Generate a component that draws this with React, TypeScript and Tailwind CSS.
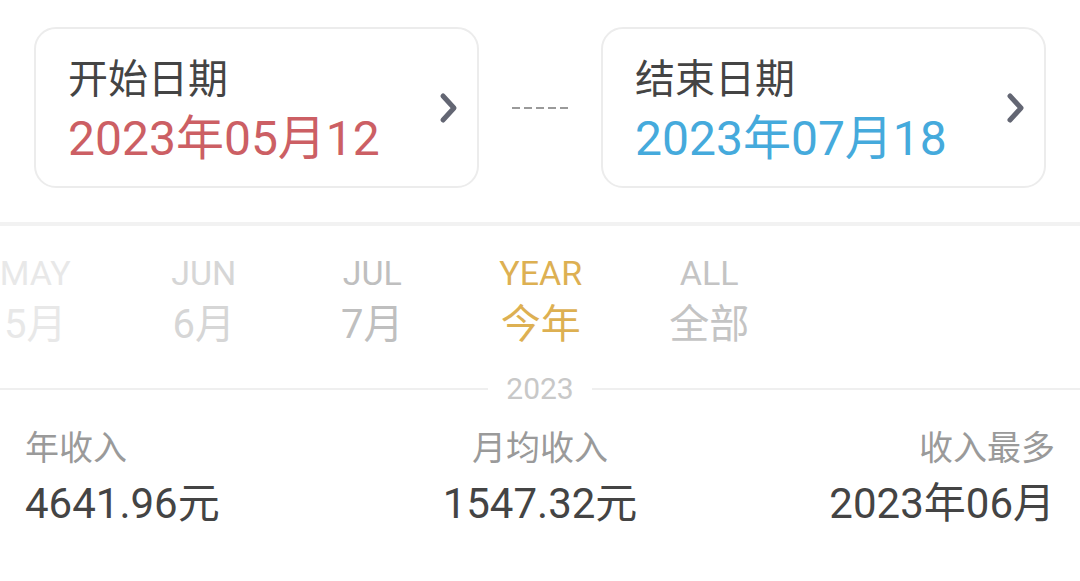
const FONT = 'font-[Roboto,"Noto_Sans_CJK_SC",sans-serif]'

interface DateCardProps {
  title: string
  date: string
  color: string
}

function DateCard({ title, date, color }: DateCardProps) {
  return (
    <div className="flex h-[161px] w-[445px] items-center rounded-[22px] border-2 border-[#ececec] bg-white pl-[32px] pr-[17px]">
      <div className="flex flex-1 flex-col pt-[7px]">
        <span className="text-[40px] leading-[48px] text-[#444444]">{title}</span>
        <span className={`mt-[7px] text-[48px] leading-[56px] ${color}`}>{date}</span>
      </div>
      {/* chevron */}
      <svg width="22" height="34" viewBox="0 0 22 34" className="text-[#636673]">
        <polyline
          points="5,5 16,17 5,29"
          fill="none"
          stroke="currentColor"
          strokeWidth="5"
          strokeLinecap="round"
          strokeLinejoin="round"
        />
      </svg>
    </div>
  )
}

const TABS = [
  { en: 'MAY', zh: '5月', color: 'text-[#e8e8e8]' },
  { en: 'JUN', zh: '6月', color: 'text-[#d6d6d6]' },
  { en: 'JUL', zh: '7月', color: 'text-[#bfbfbf]' },
  { en: 'YEAR', zh: '今年', color: 'text-[#ddb052]' },
  { en: 'ALL', zh: '全部', color: 'text-[#c4c4c4]' },
]

const STATS = [
  { label: '年收入', value: '4641.96元', align: 'items-start' },
  { label: '月均收入', value: '1547.32元', align: 'items-center' },
  { label: '收入最多', value: '2023年06月', align: 'items-end' },
]

export default function App() {
  return (
    <div className={`h-[581px] w-[1080px] overflow-hidden bg-white ${FONT}`}>
      {/* date range */}
      <div className="flex items-center justify-between px-[34px] pt-[27px]">
        <DateCard title="开始日期" date="2023年05月12" color="text-[#cc5f64]" />
        <div className="flex gap-[4px]">
          {[0, 1, 2, 3, 4].map((i) => (
            <span key={i} className="h-[2px] w-[8px] bg-[#9a9a9a]" />
          ))}
        </div>
        <DateCard title="结束日期" date="2023年07月18" color="text-[#45aadc]" />
      </div>

      <div className="mt-[34px] h-[4px] bg-[#f2f2f2]" />

      {/* period tabs */}
      <div className="flex overflow-hidden pt-[28px]">
        <div className="-ml-[49px] flex">
          {TABS.map((t) => (
            <div key={t.en} className={`flex w-[168.5px] flex-col items-center ${t.color}`}>
              <span className="text-[34px] leading-[38px]">{t.en}</span>
              <span className="mt-[9px] text-[40px] leading-[48px]">{t.zh}</span>
            </div>
          ))}
        </div>
      </div>

      {/* year divider */}
      <div className="mt-[24px] flex items-center">
        <div className="h-[2px] flex-1 bg-[#efefef]" />
        <span className="px-[18px] text-[30px] leading-[32px] text-[#c8c8c8]">2023</span>
        <div className="h-[2px] flex-1 bg-[#efefef]" />
      </div>

      {/* stats */}
      <div className="grid grid-cols-3 px-[25px] pt-[23px]">
        {STATS.map((s) => (
          <div key={s.label} className={`flex flex-col ${s.align}`}>
            <span className="text-[34px] leading-[40px] text-[#9a9a9a]">{s.label}</span>
            <span className="mt-[12px] text-[42px] leading-[48px] text-[#444444]">{s.value}</span>
          </div>
        ))}
      </div>
    </div>
  )
}
